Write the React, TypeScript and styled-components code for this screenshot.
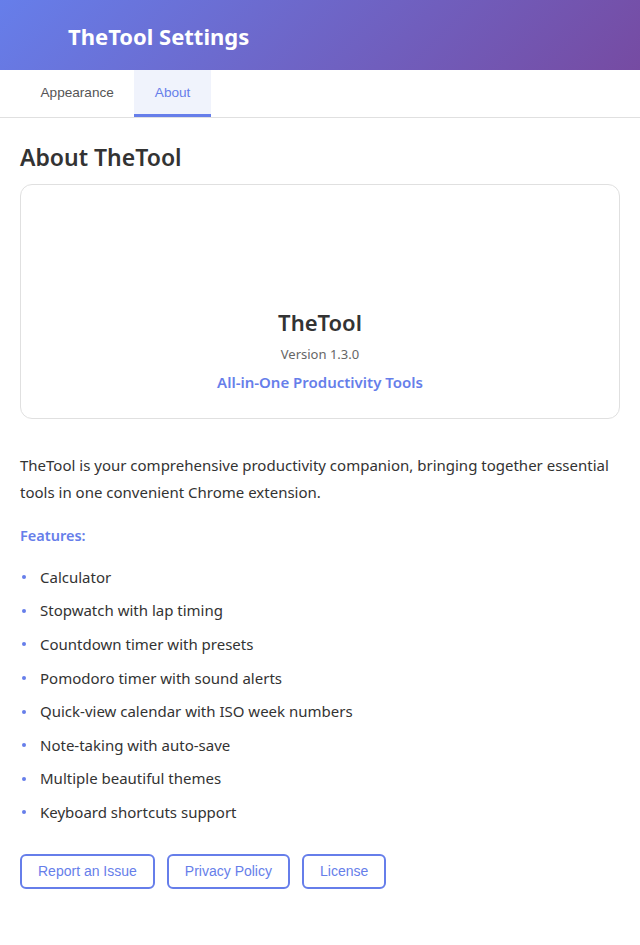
import styled, { createGlobalStyle } from 'styled-components'

const GlobalStyle = createGlobalStyle`
  body {
    margin: 0;
    background: #ffffff;
    font-family: 'Noto Sans', 'Open Sans', sans-serif;
    color: #333;
  }
`

const Page = styled.div`
  width: 640px;
  min-height: 945px;
  background: #fff;
`

const Header = styled.header`
  height: 70px;
  display: flex;
  align-items: center;
  padding: 2px 0 0 68px;
  box-sizing: border-box;
  background: linear-gradient(135deg, #667eea 0%, #764ba2 100%);
`

const Title = styled.h1`
  margin: 0;
  color: #fff;
  font-size: 22px;
  font-weight: 700;
`

const Tabs = styled.nav`
  display: flex;
  padding: 0 20px;
  border-bottom: 1px solid #e0e0e0;
`

const Tab = styled.button<{ $active?: boolean }>`
  height: 47px;
  padding: 0 20.5px;
  border: none;
  border-bottom: 3px solid ${(p) => (p.$active ? '#667eea' : 'transparent')};
  background: ${(p) => (p.$active ? '#f0f3fc' : 'transparent')};
  color: ${(p) => (p.$active ? '#667eea' : '#555')};
  font-family: 'Liberation Sans', Arial, sans-serif;
  font-size: 13.6px;
  cursor: pointer;
`

const Content = styled.main`
  padding: 20px;
`

const Heading = styled.h2`
  margin: 3px 0 11px;
  font-size: 23px;
  font-weight: 600;
  color: #333;
`

const Card = styled.section`
  border: 1px solid #e0e0e0;
  border-radius: 12px;
  height: 235px;
  display: flex;
  flex-direction: column;
  align-items: center;
  justify-content: flex-end;
  padding-bottom: 26px;
  box-sizing: border-box;
`

const AppName = styled.div`
  font-size: 22px;
  font-weight: 600;
  color: #333;
`

const Version = styled.div`
  margin-top: 8px;
  font-size: 13px;
  color: #666;
`

const Tagline = styled.div`
  margin-top: 9px;
  font-size: 15px;
  font-weight: 600;
  color: #667eea;
`

const Intro = styled.p`
  margin: 33px 0 0;
  font-size: 15px;
  line-height: 27px;
  color: #333;
`

const FeaturesLabel = styled.div`
  margin-top: 19px;
  font-size: 14.5px;
  font-weight: 600;
  color: #667eea;
`

const List = styled.ul`
  list-style: none;
  margin: 15px 0 0;
  padding: 0;
`

const Item = styled.li`
  display: flex;
  align-items: center;
  height: 33.6px;
  font-size: 15px;
  color: #333;

  &::before {
    content: '';
    width: 4px;
    height: 4px;
    margin: 1px 14px 0 2px;
    border-radius: 50%;
    background: #667eea;
  }
`

const Actions = styled.div`
  display: flex;
  gap: 12px;
  margin-top: 25px;
`

const LinkButton = styled.button`
  height: 35px;
  padding: 0 16px;
  border: 2px solid #667eea;
  border-radius: 6px;
  background: #fff;
  color: #667eea;
  font-family: 'Liberation Sans', Arial, sans-serif;
  font-size: 14px;
  cursor: pointer;
`

const features = [
  'Calculator',
  'Stopwatch with lap timing',
  'Countdown timer with presets',
  'Pomodoro timer with sound alerts',
  'Quick-view calendar with ISO week numbers',
  'Note-taking with auto-save',
  'Multiple beautiful themes',
  'Keyboard shortcuts support',
]

export default function App() {
  return (
    <Page>
      <GlobalStyle />
      <Header>
        <Title>TheTool Settings</Title>
      </Header>
      <Tabs>
        <Tab>Appearance</Tab>
        <Tab $active>About</Tab>
      </Tabs>
      <Content>
        <Heading>About TheTool</Heading>
        <Card>
          <AppName>TheTool</AppName>
          <Version>Version 1.3.0</Version>
          <Tagline>All-in-One Productivity Tools</Tagline>
        </Card>
        <Intro>
          TheTool is your comprehensive productivity companion, bringing together essential tools in one
          convenient Chrome extension.
        </Intro>
        <FeaturesLabel>Features:</FeaturesLabel>
        <List>
          {features.map((f) => (
            <Item key={f}>{f}</Item>
          ))}
        </List>
        <Actions>
          <LinkButton>Report an Issue</LinkButton>
          <LinkButton>Privacy Policy</LinkButton>
          <LinkButton>License</LinkButton>
        </Actions>
      </Content>
    </Page>
  )
}
